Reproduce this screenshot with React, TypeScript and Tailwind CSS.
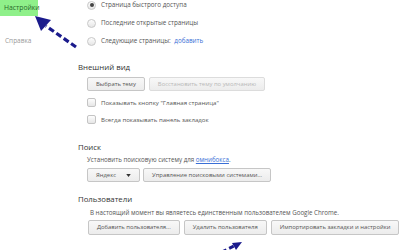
import React from "react";

const Btn = ({ children, disabled, className = "" }: { children: React.ReactNode; disabled?: boolean; className?: string }) => (
  <div
    className={`h-[14px] px-[8px] flex items-center border rounded-[2px] bg-gradient-to-b from-[#f8f8f8] to-[#ececec] text-[5.9px] whitespace-nowrap ${
      disabled ? "border-[#dcdcdc] text-[#b8b8b8]" : "border-[#c6c6c6] text-[#555]"
    } ${className}`}
  >
    {children}
  </div>
);

const Radio = ({ checked }: { checked?: boolean }) => (
  <div className="w-[9px] h-[9px] rounded-full border border-[#c8c8c8] bg-gradient-to-b from-[#fdfdfd] to-[#e6e6e6] flex items-center justify-center">
    {checked && <div className="w-[4px] h-[4px] rounded-full bg-[#444]" />}
  </div>
);

const Check = () => (
  <div className="w-[9px] h-[9px] rounded-[2px] border border-[#c4c4c4] bg-gradient-to-b from-[#fdfdfd] to-[#e6e6e6]" />
);

export default function App() {
  return (
    <div
      className="relative w-[400px] h-[250px] overflow-hidden bg-white flex"
      style={{ fontFamily: '"Open Sans", "Noto Sans", sans-serif' }}
    >
      {/* left nav */}
      <div className="w-[78px] shrink-0 flex flex-col">
        <div className="w-[38px] h-[16px] bg-[#8ff08a] flex items-center pl-[4px] text-[6.8px] text-[#2a6a2a]">Настройки</div>
        <div className="mt-[20px] pl-[5px] text-[6.5px] text-[#9a9a9a]">Справка</div>
      </div>

      {/* main */}
      <div className="flex flex-col text-[#555]">
        <div className="flex flex-col mt-[-4px] pl-[9px]">
          <div className="h-[18px] flex items-center gap-[5px]">
            <Radio checked />
            <span className="text-[6.3px]">Страница быстрого доступа</span>
          </div>
          <div className="h-[18px] flex items-center gap-[5px]">
            <Radio />
            <span className="text-[6.3px]">Последние открытые страницы</span>
          </div>
          <div className="h-[18px] flex items-center gap-[5px]">
            <Radio />
            <span className="text-[6.3px]">
              Следующие страницы: <span className="ml-[2px] text-[#3b6fd6]">добавить</span>
            </span>
          </div>
        </div>

        <div className="mt-[12px] text-[7.8px] text-[#333] leading-[10px]">Внешний вид</div>
        <div className="mt-[5px] pl-[9px] flex gap-[4px]">
          <Btn className="h-[13px]">Выбрать тему</Btn>
          <Btn disabled className="h-[13px]">Восстановить тему по умолчанию</Btn>
        </div>
        <div className="mt-[3px] pl-[9px] h-[17px] flex items-center gap-[5px]">
          <Check />
          <span className="text-[6.1px]">Показывать кнопку "Главная страница"</span>
        </div>
        <div className="pl-[9px] h-[17px] flex items-center gap-[5px]">
          <Check />
          <span className="text-[6.1px]">Всегда показывать панель закладок</span>
        </div>

        <div className="mt-[14px] text-[7.8px] text-[#333] leading-[10px]">Поиск</div>
        <div className="mt-[3px] pl-[9px] text-[6.2px] leading-[9px]">
          Установить поисковую систему для <span className="text-[#3b6fd6] underline">омнибокса</span>.
        </div>
        <div className="mt-[4px] pl-[9px] flex gap-[3px]">
          <Btn className="w-[53px] justify-between">
            <span>Яндекс</span>
            <svg width="5" height="3" viewBox="0 0 6 4">
              <path d="M0 0 L6 0 L3 4 Z" fill="#333" />
            </svg>
          </Btn>
          <Btn>Управление поисковыми системами...</Btn>
        </div>

        <div className="mt-[12px] text-[7.8px] text-[#333] leading-[10px]">Пользователи</div>
        <div className="mt-[4px] pl-[12px] text-[6.2px] leading-[9px]">
          В настоящий момент вы являетесь единственным пользователем Google Chrome.
        </div>
        <div className="mt-[3px] pl-[10px] flex gap-[4px]">
          <Btn className="h-[15px]">Добавить пользователя...</Btn>
          <Btn className="h-[15px]">Удалить пользователя</Btn>
          <Btn className="h-[15px]">Импортировать закладки и настройки</Btn>
        </div>
      </div>

      {/* arrows overlay */}
      <svg className="absolute left-0 top-0" width="400" height="250" viewBox="0 0 400 250">
        <line x1="76" y1="47" x2="46" y2="26" stroke="#1a1a8c" strokeWidth="3.2" strokeDasharray="6 3" />
        <path d="M35 16 L51 20 L41 31 Z" fill="#1a1a8c" />
        <line x1="222" y1="252" x2="234" y2="246" stroke="#1a1a8c" strokeWidth="3" strokeDasharray="5 3" />
        <path d="M242 242 L232 243 L236 250 Z" fill="#1a1a8c" />
      </svg>
    </div>
  );
}
